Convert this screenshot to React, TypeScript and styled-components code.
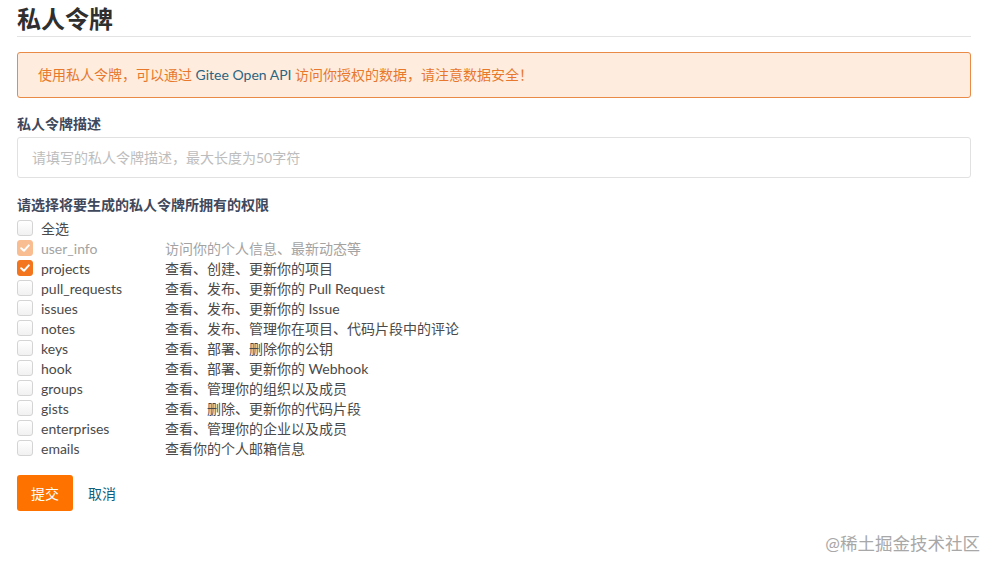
import styled, { createGlobalStyle, css } from "styled-components";

const GlobalStyle = createGlobalStyle`
  body {
    margin: 0;
    background: #fff;
    font-family: Lato, "Noto Sans CJK SC", sans-serif;
    color: #40485b;
  }
`;

const Page = styled.div`
  position: relative;
  height: 567px;
  padding: 4px 28px 0 17px;
`;

const Title = styled.h1`
  margin: 0;
  font-size: 24px;
  font-weight: 700;
  line-height: 30px;
  padding-bottom: 2px;
  color: #2f2f2f;
  border-bottom: 1px solid #e3e3e3;
`;

const Alert = styled.div`
  margin-top: 15px;
  height: 44px;
  line-height: 44px;
  padding: 0 20px;
  border: 1px solid #e98a47;
  border-radius: 3px;
  background: #feeddf;
  color: #e7782c;
  font-size: 14px;
`;

const Api = styled.span`
  color: #2d6480;
`;

const Label = styled.div<{ $top: number }>`
  margin-top: ${(p) => p.$top}px;
  font-size: 14px;
  font-weight: 700;
  line-height: 20px;
  color: #40485b;
`;

const Input = styled.input`
  display: block;
  box-sizing: border-box;
  width: 100%;
  height: 41px;
  margin-top: 3px;
  padding: 0 14px;
  border: 1px solid #e1e1e1;
  border-radius: 3px;
  font-family: inherit;
  font-size: 14px;
  outline: none;
  &::placeholder {
    color: #bdbdbd;
  }
`;

const List = styled.div`
  margin-top: 3px;
`;

const Row = styled.label<{ $disabled?: boolean }>`
  display: grid;
  grid-template-columns: 16px 116px 1fr;
  column-gap: 8px;
  align-items: center;
  height: 20px;
  font-size: 14px;
  color: ${(p) => (p.$disabled ? "#a3a3a3" : "#4a4a4a")};
`;

const Box = styled.span<{ $checked?: boolean; $disabled?: boolean }>`
  box-sizing: border-box;
  width: 16px;
  height: 16px;
  border-radius: 3px;
  border: 1px solid #d4d4d4;
  background: linear-gradient(#fff, #f1f1f1);
  display: flex;
  align-items: center;
  justify-content: center;
  ${(p) =>
    p.$checked &&
    css`
      border-color: #f3761f;
      background: #f3761f;
    `}
  ${(p) =>
    p.$checked &&
    p.$disabled &&
    css`
      border-color: #f9bd92;
      background: #f9bd92;
    `}
`;

const Actions = styled.div`
  display: flex;
  align-items: center;
  gap: 15px;
  margin-top: 17px;
`;

const Submit = styled.button`
  width: 56px;
  height: 36px;
  border: none;
  border-radius: 3px;
  background: #fe7300;
  color: #fff;
  font-family: inherit;
  font-size: 14px;
`;

const Cancel = styled.a`
  color: #0f5f7e;
  font-size: 14px;
`;

const Watermark = styled.div`
  position: absolute;
  right: 19px;
  bottom: 16px;
  font-size: 17.5px;
  color: #a8a8a8;
`;

const Check = () => (
  <svg width="12" height="12" viewBox="0 0 12 12">
    <path d="M2.2 6.2 L4.9 8.8 L9.8 3.4" fill="none" stroke="#fff" strokeWidth="2" strokeLinecap="round" strokeLinejoin="round" />
  </svg>
);

type Scope = { name: string; desc: string; checked?: boolean; disabled?: boolean };

const scopes: Scope[] = [
  { name: "user_info", desc: "访问你的个人信息、最新动态等", checked: true, disabled: true },
  { name: "projects", desc: "查看、创建、更新你的项目", checked: true },
  { name: "pull_requests", desc: "查看、发布、更新你的 Pull Request" },
  { name: "issues", desc: "查看、发布、更新你的 Issue" },
  { name: "notes", desc: "查看、发布、管理你在项目、代码片段中的评论" },
  { name: "keys", desc: "查看、部署、删除你的公钥" },
  { name: "hook", desc: "查看、部署、更新你的 Webhook" },
  { name: "groups", desc: "查看、管理你的组织以及成员" },
  { name: "gists", desc: "查看、删除、更新你的代码片段" },
  { name: "enterprises", desc: "查看、管理你的企业以及成员" },
  { name: "emails", desc: "查看你的个人邮箱信息" },
];

export default function App() {
  return (
    <>
      <GlobalStyle />
      <Page>
        <Title>私人令牌</Title>
        <Alert>
          使用私人令牌，可以通过 <Api>Gitee Open API</Api> 访问你授权的数据，请注意数据安全！
        </Alert>
        <Label $top={16}>私人令牌描述</Label>
        <Input placeholder="请填写的私人令牌描述，最大长度为50字符" />
        <Label $top={17}>请选择将要生成的私人令牌所拥有的权限</Label>
        <List>
          <Row>
            <Box />
            <span>全选</span>
            <span />
          </Row>
          {scopes.map((s) => (
            <Row key={s.name} $disabled={s.disabled}>
              <Box $checked={s.checked} $disabled={s.disabled}>
                {s.checked && <Check />}
              </Box>
              <span>{s.name}</span>
              <span>{s.desc}</span>
            </Row>
          ))}
        </List>
        <Actions>
          <Submit>提交</Submit>
          <Cancel>取消</Cancel>
        </Actions>
        <Watermark>@稀土掘金技术社区</Watermark>
      </Page>
    </>
  );
}
